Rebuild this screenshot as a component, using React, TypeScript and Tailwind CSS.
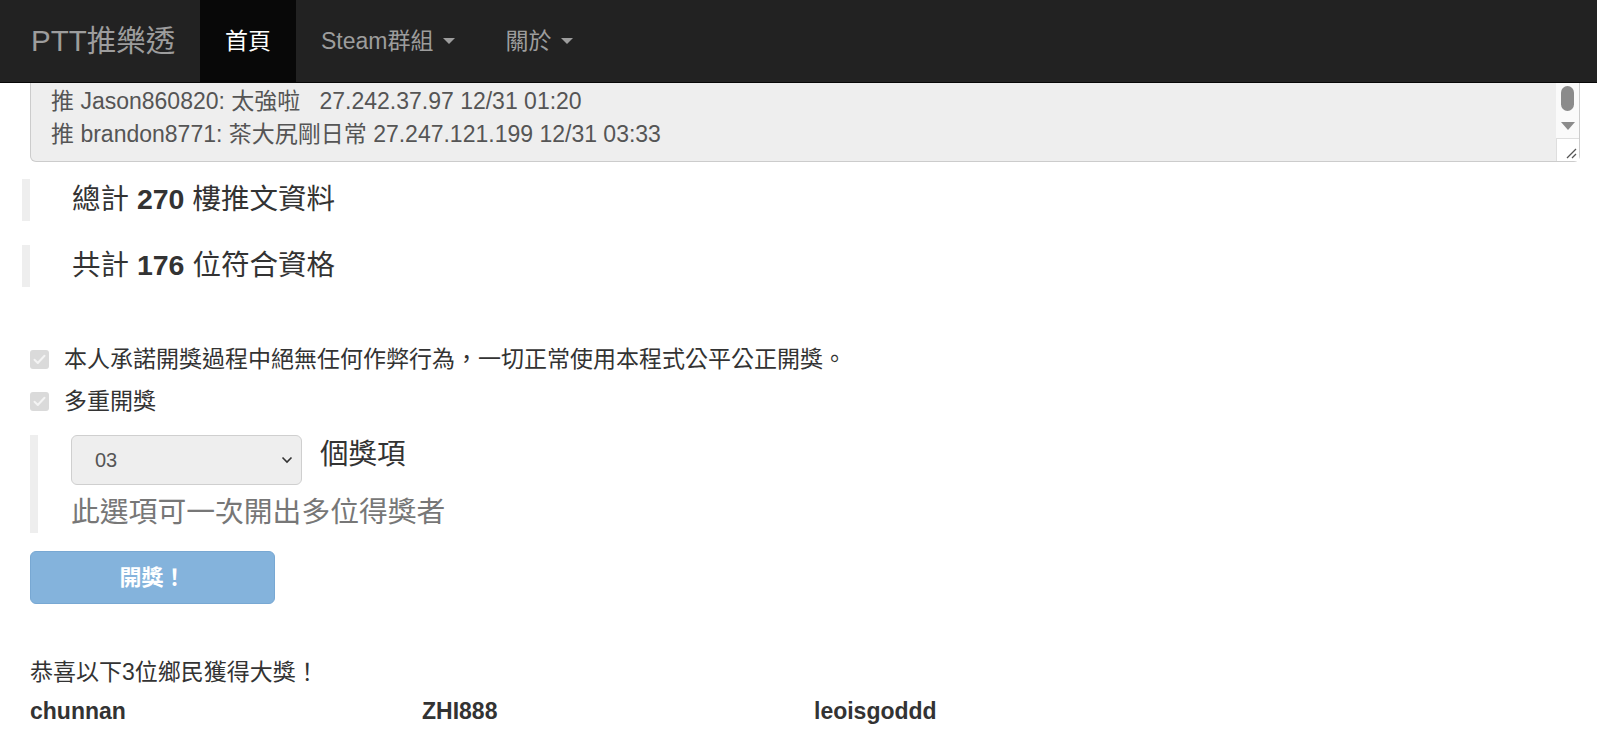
import React from 'react';

const Caret = () => (
  <span className="ml-[10px] inline-block h-0 w-0 border-x-[6.6px] border-t-[6.6px] border-x-transparent border-t-current align-middle" />
);

const Check = () => (
  <div className="flex h-[19px] w-[19px] items-center justify-center rounded-[3px] bg-[#dadada]">
    <svg width="13" height="11" viewBox="0 0 13 11" fill="none">
      <path d="M1.5 5.8 L4.8 9 L11.5 1.8" stroke="#f4f4f4" strokeWidth="2" strokeLinecap="round" strokeLinejoin="round" />
    </svg>
  </div>
);

const winners = ['chunnan', 'ZHI888', 'leoisgoddd'];

export default function App() {
  return (
    <div className="min-h-screen w-full bg-white font-['Liberation_Sans','Noto_Sans_CJK_TC',sans-serif] text-[#333]">
      <nav className="flex h-[83px] border-b border-[#080808] bg-[#222] text-[#9d9d9d]">
        <div className="flex w-[200px] items-center pl-[31px] text-[29.5px]">PTT推樂透</div>
        <div className="flex items-center bg-[#080808] px-[25px] text-[23px] text-white">首頁</div>
        <div className="flex items-center px-[25px] text-[23px]">
          Steam群組
          <Caret />
        </div>
        <div className="flex items-center px-[25px] text-[23px]">
          關於
          <Caret />
        </div>
      </nav>

      <div className="pl-[30px] pr-[17px]">
        <div className="relative rounded-b-[6px] border border-t-0 border-[#ccc] bg-[#eee] pb-[10px] pl-[20px] pt-[1.5px] text-[23px] leading-[33px] whitespace-pre text-[#555]">
          <div>推 Jason860820: 太強啦   27.242.37.97 12/31 01:20</div>
          <div>推 brandon8771: 茶大尻剛日常 27.247.121.199 12/31 03:33</div>
          <div className="absolute bottom-0 right-0 top-0 w-[23px] bg-[#fafafa]">
            <div className="ml-[5px] mt-[3px] h-[25px] w-[13px] rounded-full bg-[#8b8b8b]" />
            <div className="ml-[5px] mt-[11px] h-0 w-0 border-x-[7px] border-t-[8px] border-x-transparent border-t-[#8b8b8b]" />
            <div className="absolute bottom-0 right-0 flex h-[23px] w-[23px] items-end justify-end border-l border-t border-[#dedede] bg-white pb-[2px] pr-[2px]">
              <svg width="12" height="12" viewBox="0 0 12 12">
                <path d="M11 2 L2 11 M11 7 L7 11" stroke="#555" strokeWidth="1.3" />
              </svg>
            </div>
          </div>
        </div>

        <div className="-ml-[8px] mt-[17px] flex flex-col gap-[24px]">
          <div className="h-[42px] border-l-[8px] border-[#eee] pl-[42px] text-[28.5px] leading-[40px]">
            總計 <b>270</b> 樓推文資料
          </div>
          <div className="h-[42px] border-l-[8px] border-[#eee] pl-[42px] text-[28.5px] leading-[40px]">
            共計 <b>176</b> 位符合資格
          </div>
        </div>

        <div className="mt-[52px] text-[23px]">
          <div className="flex h-[42px] items-center gap-[15px]">
            <Check />
            <span>本人承諾開獎過程中絕無任何作弊行為，一切正常使用本程式公平公正開獎。</span>
          </div>
          <div className="flex h-[42px] items-center gap-[15px]">
            <Check />
            <span>多重開獎</span>
          </div>
        </div>

        <div className="mt-[12px] h-[98px] border-l-[8px] border-[#eee] pl-[33px]">
          <div className="flex items-start gap-[18px]">
            <div className="flex h-[50px] w-[231px] items-center justify-between rounded-[6px] border border-[#cfcfcf] bg-[#eee] pl-[23px] pr-[8px] text-[20px] text-[#555]">
              <span>03</span>
              <svg width="12" height="8" viewBox="0 0 12 8" fill="none">
                <path d="M1.5 1.5 L6 6 L10.5 1.5" stroke="#333" strokeWidth="1.6" />
              </svg>
            </div>
            <span className="text-[28.5px] leading-[38px]">個獎項</span>
          </div>
          <div className="mt-[6px] text-[28.8px] leading-[42px] text-[#777]">此選項可一次開出多位得獎者</div>
        </div>

        <button className="mt-[18px] flex h-[53px] w-[245px] items-center justify-center rounded-[6px] border border-[#78a8d3] bg-[#84b3dc] text-[22px] font-bold text-white">
          開獎！
        </button>

        <div className="mt-[52px] text-[23px] leading-[33px]">恭喜以下3位鄉民獲得大獎！</div>
        <div className="mt-[6px] grid grid-cols-[392px_392px_392px] text-[23px] font-bold leading-[33px]">
          {winners.map((w) => (
            <div key={w}>{w}</div>
          ))}
        </div>
      </div>
    </div>
  );
}
